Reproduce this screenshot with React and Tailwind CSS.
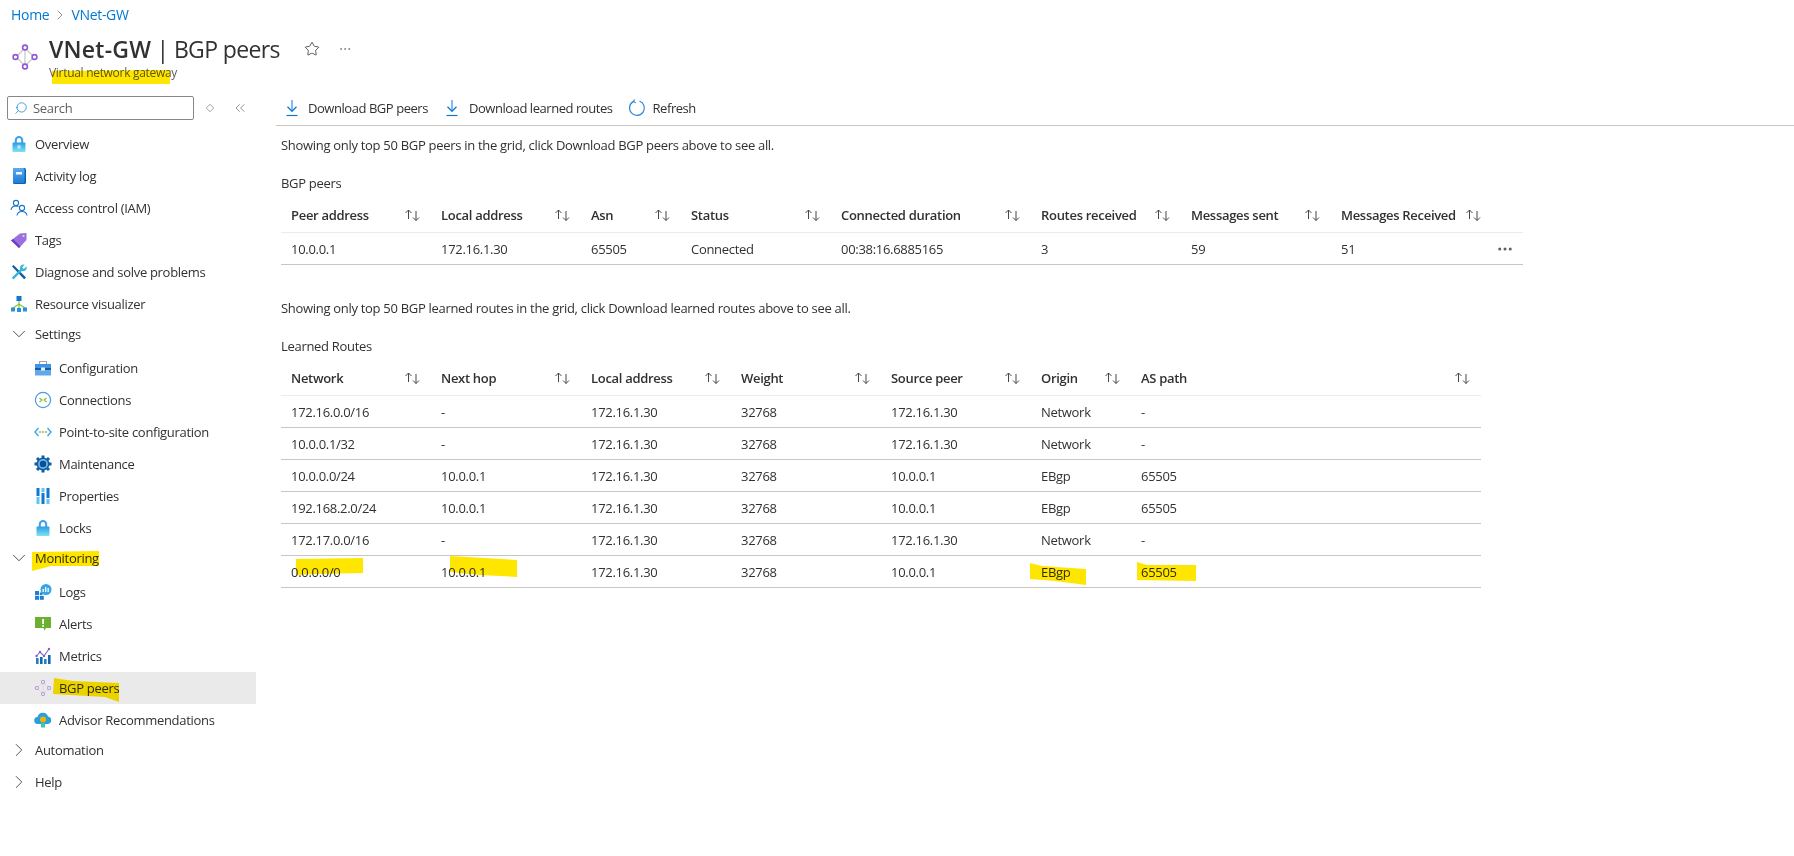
import { ChevronDown, ChevronRight, ChevronsLeft, Ellipsis, Search, Star } from "lucide-react";

const GatewayIcon = ({ className }) => (
  <svg viewBox="0 0 28 28" className={className} fill="none">
    <path d="M14 5 L14 23 M14 5 L5 14 L14 23 L23 14 Z" stroke="#c8c6c4" strokeWidth="1.2" />
    <g fill="#fff" stroke="#8c5ad6" strokeWidth="1.6">
      <circle cx="14" cy="4.5" r="2.4" />
      <circle cx="14" cy="23.5" r="2.4" />
      <circle cx="4.5" cy="14" r="2.4" />
      <circle cx="23.5" cy="14" r="2.4" />
    </g>
  </svg>
);

const LockIcon = ({ id = "lock", sparkle }) => (
  <svg viewBox="0 0 18 18" className="w-[18px] h-[18px]">
    <defs>
      <linearGradient id={id} x1="0" y1="0" x2="0" y2="1">
        <stop offset="0" stopColor="#2a9be6" />
        <stop offset="1" stopColor="#7fe3f0" />
      </linearGradient>
    </defs>
    <path d="M4.8 8V5.2a4.2 4.2 0 0 1 8.4 0V8h-2V5.2a2.2 2.2 0 0 0-4.4 0V8z" fill="#3aa0e4" />
    <rect x="2.5" y="7.5" width="13" height="9.5" rx="1" fill={`url(#${id})`} />
    {sparkle && <path d="M9 9.5v5M6.8 12h4.400M7.400 10.400l3.200 3.200M10.600 10.400l-3.200 3.200" stroke="#d6f4fb" strokeWidth=".8" />}
  </svg>
);

const BookIcon = () => (
  <svg viewBox="0 0 18 18" className="w-[18px] h-[18px]">
    <defs>
      <linearGradient id="book" x1="0" y1="0" x2="0" y2="1">
        <stop offset="0" stopColor="#5ea9ee" />
        <stop offset="1" stopColor="#1b7fd6" />
      </linearGradient>
    </defs>
    <rect x="3" y="1" width="13" height="16" rx="1.5" fill="#0f62ac" />
    <rect x="3" y="1" width="11.5" height="15" rx="1.5" fill="url(#book)" />
    <rect x="6" y="5" width="6" height="2.5" fill="#f2f8fd" />
  </svg>
);

const PeopleIcon = () => (
  <svg viewBox="0 0 18 18" className="w-[18px] h-[18px]" fill="none" stroke="#1a73c7" strokeWidth="1.1">
    <circle cx="6" cy="4" r="2.6" />
    <path d="M1 11c.4-2.8 2.4-4 5-4 1 0 1.800.2 2.500.6" />
    <circle cx="12" cy="9" r="2.6" />
    <path d="M7 16.500c.4-2.800 2.400-4 5-4s4.600 1.200 5 4" />
  </svg>
);

const TagIcon = () => (
  <svg viewBox="0 0 18 18" className="w-[18px] h-[18px]">
    <path d="M1 9.500 10 2.500 16.500 2 16.500 9 9 17z" fill="#9a6fe0" />
    <path d="M1 9.500 9 17l1.500-1.500L3 8z" fill="#6b3fc0" />
    <circle cx="13.500" cy="5" r="1.100" fill="#e3d6f7" />
  </svg>
);

const WrenchIcon = () => (
  <svg viewBox="0 0 18 18" className="w-[18px] h-[18px]">
    <path d="M2 3.500 3.500 2 16 14.500 14.200 16.300z" fill="#0b5fa5" />
    <path d="M16.500 3.500 13.800 6 12.200 4.400 14.600 1.600C12.600 1 10.200 2.300 10 4.600 9.900 5.300 10 5.800 10.200 6.300L1.800 14.700 3.500 16.500 11.800 8C14.200 8.700 16.800 7 16.800 4.700z" fill="#33b5d8" />
  </svg>
);

const TreeIcon = () => (
  <svg viewBox="0 0 18 18" className="w-[18px] h-[18px]">
    <path d="M9 5V14M9 9 3 13M9 9l6 4" stroke="#86c440" strokeWidth="1.2" fill="none" />
    <rect x="6.500" y="1" width="5" height="5" fill="#0f78d4" />
    <rect x="1" y="12.500" width="4" height="4" fill="#2a8fdc" />
    <rect x="7" y="13" width="4" height="4" fill="#2a8fdc" />
    <rect x="13" y="12.500" width="4" height="4" fill="#2a8fdc" />
  </svg>
);

const BriefcaseIcon = () => (
  <svg viewBox="0 0 18 18" className="w-[18px] h-[18px]">
    <path d="M5.500 5V2.500h7V5" fill="none" stroke="#a7a7a7" strokeWidth="1.200" />
    <rect x="1" y="5" width="16" height="4" fill="#3f94e4" />
    <rect x="1" y="9" width="16" height="2.500" fill="#0f5ca8" />
    <rect x="1" y="11.500" width="16" height="5" fill="#5ea9ee" />
    <rect x="7" y="8.500" width="4" height="3" fill="#e8f3fc" />
  </svg>
);

const ConnectionIcon = () => (
  <svg viewBox="0 0 18 18" className="w-[18px] h-[18px]" fill="none">
    <circle cx="9" cy="9" r="7.600" stroke="#4a9ee0" strokeWidth="1.200" />
    <path d="M5.500 7 8 9l-2.500 2M12.500 7 10 9l2.500 2" stroke="#7cb83a" strokeWidth="1.100" />
  </svg>
);

const PointIcon = () => (
  <svg viewBox="0 0 18 18" className="w-[18px] h-[18px]" fill="none">
    <path d="M4.500 5 1 9l3.500 4M13.500 5 17 9l-3.500 4" stroke="#35a6e8" strokeWidth="1.300" />
    <g fill="#7cb83a">
      <circle cx="6" cy="9" r=".9" />
      <circle cx="9" cy="9" r=".9" />
      <circle cx="12" cy="9" r=".9" />
    </g>
  </svg>
);

const GearIcon = () => (
  <svg viewBox="0 0 18 18" className="w-[18px] h-[18px]">
    <g fill="#0f5ca8">
      <circle cx="9" cy="9" r="6.500" />
      <rect x="7.500" y=".5" width="3" height="17" />
      <rect x=".5" y="7.500" width="17" height="3" />
      <rect x="7.500" y=".5" width="3" height="17" transform="rotate(45 9 9)" />
      <rect x="7.500" y=".5" width="3" height="17" transform="rotate(-45 9 9)" />
    </g>
    <circle cx="9" cy="9" r="5" fill="#6db3ea" />
    <circle cx="9" cy="9" r="3.200" fill="#0c4f8a" />
  </svg>
);

const BarsIcon = () => (
  <svg viewBox="0 0 18 18" className="w-[18px] h-[18px]">
    <rect x="2.500" y="1" width="3" height="8" fill="#0f78d4" />
    <rect x="2.500" y="10" width="3" height="7" fill="#5cc8f0" />
    <rect x="7.500" y="1" width="3" height="4" fill="#5cc8f0" />
    <rect x="7.500" y="6" width="3" height="11" fill="#0f78d4" />
    <rect x="12.500" y="1" width="3" height="10" fill="#0f78d4" />
    <rect x="12.500" y="12" width="3" height="5" fill="#5cc8f0" />
  </svg>
);

const LogsIcon = () => (
  <svg viewBox="0 0 18 18" className="w-[18px] h-[18px]">
    <circle cx="12" cy="6.500" r="5.500" fill="#35a6e8" />
    <rect x="8.500" y="6" width="1.300" height="3" fill="#fff" />
    <rect x="11" y="4" width="1.300" height="5" fill="#fff" />
    <rect x="13.500" y="5" width="1.300" height="4" fill="#fff" />
    <rect x="1" y="8" width="4" height="4" fill="#1f7fd1" />
    <rect x="1" y="12.800" width="4" height="4" fill="#1f7fd1" />
    <rect x="5.800" y="12.800" width="4" height="4" fill="#1f7fd1" />
    <rect x="5.800" y="9.500" width="2.500" height="2.500" fill="#1f7fd1" />
  </svg>
);

const AlertIcon = () => (
  <svg viewBox="0 0 18 18" className="w-[18px] h-[18px]">
    <path d="M1 2h16v11h-5l-1.500 2.500L9.500 13H1z" fill="#6cb030" />
    <rect x="8.200" y="4" width="1.800" height="5" fill="#fff" />
    <rect x="8.200" y="10" width="1.800" height="1.800" fill="#fff" />
  </svg>
);

const MetricsIcon = () => (
  <svg viewBox="0 0 18 18" className="w-[18px] h-[18px]">
    <rect x="2" y="11" width="2.600" height="6" fill="#1f7fd1" />
    <rect x="6" y="10" width="2.600" height="7" fill="#1468ae" />
    <rect x="10" y="12" width="2.600" height="5" fill="#1f7fd1" />
    <rect x="14" y="8" width="2.600" height="9" fill="#1468ae" />
    <path d="M2.500 9 6 5l4 4 5-7" fill="none" stroke="#8661c5" strokeWidth="1.100" />
    <g fill="#8661c5">
      <circle cx="2.500" cy="9" r="1.200" />
      <circle cx="6" cy="5" r="1.200" />
      <circle cx="10" cy="9" r="1.200" />
      <circle cx="15" cy="2" r="1.200" />
    </g>
  </svg>
);

const AdvisorIcon = () => (
  <svg viewBox="0 0 18 18" className="w-[18px] h-[18px]">
    <path d="M4 13a3.500 3.500 0 0 1-.5-7A5.500 5.500 0 0 1 14 5.500 3.800 3.800 0 0 1 14 13z" fill="#2a9fd8" />
    <rect x="7" y="12" width="4" height="4.500" fill="#3cc4b8" />
    <circle cx="9" cy="8.500" r="3" fill="#f2b400" />
  </svg>
);

// yellow marker strokes, they sit over the text
const Mark = ({ className, points, w, h }) => (
  <svg viewBox={`0 0 ${w} ${h}`} className={`absolute mix-blend-multiply pointer-events-none ${className}`}>
    <polygon points={points} fill="#ffe600" />
  </svg>
);

const SortArrows = () => (
  <svg viewBox="0 0 17 12" className="w-[17px] h-3" fill="none" stroke="#484644" strokeWidth="1">
    <path d="M4.500 10V1M1.500 4l3-3 3 3" />
    <path d="M12 2v9.500M9 8.500l3 3 3-3" />
  </svg>
);

const DownloadIcon = () => (
  <svg viewBox="0 0 14 18" className="w-[14px] h-[18px]" fill="none">
    <path d="M7 1v10" stroke="#83b9f9" strokeWidth="2" />
    <path d="M2.500 7.800 7 12.300l4.500-4.500" stroke="#0f78d4" strokeWidth="1.300" />
    <path d="M1.500 16.500h11" stroke="#0f78d4" strokeWidth="1.200" />
  </svg>
);

const RefreshIcon = () => (
  <svg viewBox="0 0 18 18" className="w-[18px] h-[18px]" fill="none" stroke="#2b88d8" strokeWidth="1.200">
    <path d="M5.500 2.400A7.400 7.400 0 1 0 11.500 2" />
    <path d="M6.500 .5 5.500 2.600l2.200 1.200" />
  </svg>
);

const topItems = [
  ["Overview", () => <LockIcon id="lock-overview" sparkle />],
  ["Activity log", BookIcon],
  ["Access control (IAM)", PeopleIcon],
  ["Tags", TagIcon],
  ["Diagnose and solve problems", WrenchIcon],
  ["Resource visualizer", TreeIcon],
];

const settingsItems = [
  ["Configuration", BriefcaseIcon],
  ["Connections", ConnectionIcon],
  ["Point-to-site configuration", PointIcon],
  ["Maintenance", GearIcon],
  ["Properties", BarsIcon],
  ["Locks", () => <LockIcon id="lock-locks" />],
];

const peerCols = "grid grid-cols-[150px_150px_100px_150px_200px_150px_150px_161px_30px] w-[1242px]";
const routeCols = "grid grid-cols-[150px_150px_150px_150px_150px_100px_350px] w-[1200px]";

const peerHeaders = ["Peer address", "Local address", "Asn", "Status", "Connected duration", "Routes received", "Messages sent", "Messages Received"];
const peerRow = ["10.0.0.1", "172.16.1.30", "65505", "Connected", "00:38:16.6885165", "3", "59", "51"];

const routeHeaders = ["Network", "Next hop", "Local address", "Weight", "Source peer", "Origin", "AS path"];
const routeRows = [
  ["172.16.0.0/16", "-", "172.16.1.30", "32768", "172.16.1.30", "Network", "-"],
  ["10.0.0.1/32", "-", "172.16.1.30", "32768", "172.16.1.30", "Network", "-"],
  ["10.0.0.0/24", "10.0.0.1", "172.16.1.30", "32768", "10.0.0.1", "EBgp", "65505"],
  ["192.168.2.0/24", "10.0.0.1", "172.16.1.30", "32768", "10.0.0.1", "EBgp", "65505"],
  ["172.17.0.0/16", "-", "172.16.1.30", "32768", "172.16.1.30", "Network", "-"],
];

function NavItem({ label, Icon, child, active, mark }) {
  return (
    <div className={`flex items-center h-8 gap-[7px] ${child ? "pl-[34px]" : "pl-[10px]"} ${active ? "bg-[#ebeaea]" : ""}`}>
      <Icon />
      <span className="relative">
        {label}
        {mark}
      </span>
    </div>
  );
}

function NavGroup({ label, open, mark }) {
  const Chevron = open ? ChevronDown : ChevronRight;
  return (
    <div className="flex items-center h-[28px] mb-1 gap-[7px] pl-[10px]">
      <span className="w-[18px] flex justify-center">
        <Chevron size={22} strokeWidth={0.9} className="shrink-0" />
      </span>
      <span className="relative">
        {label}
        {mark}
      </span>
    </div>
  );
}

function HeaderCell({ label }) {
  return (
    <div className="flex items-center justify-between px-[10px] pb-[2px] font-semibold">
      <span>{label}</span>
      <SortArrows />
    </div>
  );
}

export default function App() {
  return (
    <div className="min-h-[856px] bg-white text-[13px] leading-5 text-[#323130] font-['Open_Sans',sans-serif] tracking-[-0.3px] overflow-hidden">
      {/* Breadcrumb */}
      <div className="flex items-center h-[30px] pl-[11px] text-sm text-[#0078d4]">
        <span>Home</span>
        <ChevronRight size={16} strokeWidth={1} className="mx-[3px] text-[#605e5c]" />
        <span>VNet-GW</span>
      </div>

      {/* Page title */}
      <div className="flex h-[60px] pl-[11px] pt-[6px]">
        <GatewayIcon className="w-7 h-7 mt-[7px]" />
        <div className="ml-[10px]">
          <div className="flex items-center h-[26px]">
            <h1 className="text-[23px] tracking-[-0.65px]">
              <span className="font-semibold tracking-[0.25px]">VNet-GW</span> | BGP peers
            </h1>
            <Star size={16} strokeWidth={1.2} className="ml-[24px]" />
            <Ellipsis size={14} strokeWidth={1} className="ml-[18px] text-[#605e5c]" />
          </div>
          <div className="relative mt-[3px] text-xs leading-4 text-[#605e5c]">
            Virtual network gateway
            <Mark className="left-[3px] top-[5px] w-[118px] h-[14px]" w={118} h={14} points="0,1 118,0 118,14 0,14" />
          </div>
        </div>
      </div>

      <div className="flex">
        {/* Sidebar */}
        <aside className="w-[256px] shrink-0 pt-[6px]">
          <div className="flex items-center">
            <div className="flex items-center h-6 w-[187px] ml-[7px] border border-[#8a8886] rounded-[2px] pl-[6px] text-[#605e5c]">
              <Search size={14} strokeWidth={1.2} className="text-[#0078d4] -scale-x-100" />
              <span className="ml-[5px]">Search</span>
            </div>
            <span className="ml-[12px] w-[8px] h-[8px] border border-[#8a8886] rotate-45 scale-75" />
            <ChevronsLeft size={16} strokeWidth={1} className="ml-[18px] text-[#605e5c]" />
          </div>
          <nav className="mt-2">
            {topItems.map(([label, Icon]) => (
              <NavItem key={label} label={label} Icon={Icon} />
            ))}
            <NavGroup label="Settings" open />
            {settingsItems.map(([label, Icon]) => (
              <NavItem key={label} label={label} Icon={Icon} child />
            ))}
            <NavGroup
              label="Monitoring"
              open
              mark={<Mark className="left-[-4px] top-[3px] w-[68px] h-5" w={68} h={20} points="1,1 68,0 68,15 20,15 1,20" />}
            />
            <NavItem label="Logs" Icon={LogsIcon} child />
            <NavItem label="Alerts" Icon={AlertIcon} child />
            <NavItem label="Metrics" Icon={MetricsIcon} child />
            <NavItem
              label="BGP peers"
              Icon={() => <GatewayIcon className="w-[18px] h-[18px] opacity-60" />}
              child
              active
              mark={<Mark className="left-[-6px] top-0 w-[66px] h-6" w={66} h={24} points="1,0 20,3 66,5 66,24 52,19 0,16" />}
            />
            <NavItem label="Advisor Recommendations" Icon={AdvisorIcon} child />
            <NavGroup label="Automation" />
            <NavGroup label="Help" />
          </nav>
        </aside>

        {/* Main */}
        <main className="flex-1 ml-[20px]">
          <div className="flex items-center h-9 border-b border-[#c8c6c4] pl-[9px] tracking-[-0.45px]">
            <DownloadIcon />
            <span className="ml-[9px]">Download BGP peers</span>
            <span className="ml-[17px]">
              <DownloadIcon />
            </span>
            <span className="ml-[10px]">Download learned routes</span>
            <span className="ml-[15px]">
              <RefreshIcon />
            </span>
            <span className="ml-[7px]">Refresh</span>
          </div>

          <div className="pl-[5px]">
            <p className="mt-[9px]">Showing only top 50 BGP peers in the grid, click Download BGP peers above to see all.</p>
            <p className="mt-[18px]">BGP peers</p>

            <div className={`${peerCols} h-[34px] mt-[6px] border-b border-[#edebe9]`}>
              {peerHeaders.map((h) => (
                <HeaderCell key={h} label={h} />
              ))}
            </div>
            <div className={`${peerCols} h-8 items-center border-b border-[#c8c6c4]`}>
              {peerRow.map((c, i) => (
                <div key={i} className="pl-[10px]">
                  {c}
                </div>
              ))}
              <Ellipsis size={18} strokeWidth={2} className="ml-1 text-[#605e5c]" />
            </div>

            <p className="mt-[33px]">Showing only top 50 BGP learned routes in the grid, click Download learned routes above to see all.</p>
            <p className="mt-[18px]">Learned Routes</p>

            <div className={`${routeCols} h-[34px] mt-[6px] border-b border-[#edebe9]`}>
              {routeHeaders.map((h) => (
                <HeaderCell key={h} label={h} />
              ))}
            </div>
            {routeRows.map((row) => (
              <div key={row[0]} className={`${routeCols} h-8 items-center border-b border-[#c8c6c4]`}>
                {row.map((c, i) => (
                  <div key={i} className="pl-[10px]">
                    {c}
                  </div>
                ))}
              </div>
            ))}
            <div className={`${routeCols} h-8 items-center border-b border-[#c8c6c4]`}>
              <div className="pl-[10px]">
                <span className="relative">
                  0.0.0.0/0
                  <Mark className="left-[5px] top-[-5px] w-[67px] h-[17px]" w={67} h={17} points="0,1 67,0 67,15 20,16 0,17" />
                </span>
              </div>
              <div className="pl-[10px]">
                <span className="relative">
                  10.0.0.1
                  <Mark className="left-[9px] top-[-7px] w-[67px] h-[21px]" w={67} h={21} points="0,0 67,4 67,21 30,19 0,16" />
                </span>
              </div>
              <div className="pl-[10px]">172.16.1.30</div>
              <div className="pl-[10px]">32768</div>
              <div className="pl-[10px]">10.0.0.1</div>
              <div className="pl-[10px]">
                <span className="relative">
                  EBgp
                  <Mark className="left-[-11px] top-0 w-[56px] h-[22px]" w={56} h={22} points="0,0 12,3 56,6 56,22 25,18 0,16" />
                </span>
              </div>
              <div className="pl-[10px]">
                <span className="relative">
                  65505
                  <Mark className="left-[-4px] top-[-1px] w-[59px] h-[19px]" w={59} h={19} points="0,0 10,3 59,3 59,19 0,18" />
                </span>
              </div>
            </div>
          </div>
        </main>
      </div>
    </div>
  );
}
